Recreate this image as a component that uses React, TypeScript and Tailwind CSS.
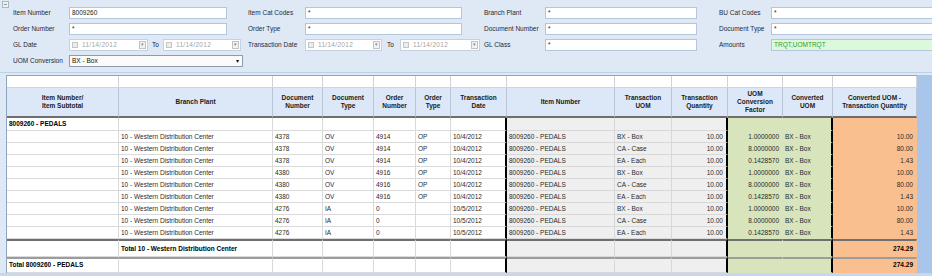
import React from "react";

const widths = [
  "w-[112px]",
  "w-[154px]",
  "w-[50px]",
  "w-[51px]",
  "w-[42px]",
  "w-[35px]",
  "w-[56px]",
  "w-[108px]",
  "w-[57px]",
  "w-[56px]",
  "w-[55px]",
  "w-[50px]",
  "w-[84px]",
];

const bodyCls = [
  "bg-white border-[#dadada]",
  "bg-white border-[#dadada]",
  "bg-white border-[#dadada]",
  "bg-white border-[#dadada]",
  "bg-white border-[#dadada]",
  "bg-white border-[#dadada]",
  "bg-white border-[#dadada] border-r-2 border-r-black",
  "bg-[#efefef] border-[#d8d8d8]",
  "bg-[#efefef] border-[#d8d8d8]",
  "bg-[#efefef] border-[#d8d8d8] border-r-2 border-r-black",
  "bg-[#d8e4bc] border-[#d8e4bc]",
  "bg-[#d8e4bc] border-[#d8e4bc] border-r-2 border-r-black",
  "bg-[#fabf8f] border-[#fabf8f]",
];

const rightAligned = [9, 10, 12];

const headers = [
  ["Item Number/", "Item Subtotal"],
  ["Branch Plant"],
  ["Document", "Number"],
  ["Document", "Type"],
  ["Order", "Number"],
  ["Order", "Type"],
  ["Transaction", "Date"],
  ["Item Number"],
  ["Transaction", "UOM"],
  ["Transaction", "Quantity"],
  ["UOM", "Conversion", "Factor"],
  ["Converted", "UOM"],
  ["Converted UOM -", "Transaction Quantity"],
];

const data = [
  ["4378", "OV", "4914", "OP", "10/4/2012", "BX - Box", "1.0000000", "10.00"],
  ["4378", "OV", "4914", "OP", "10/4/2012", "CA - Case", "8.0000000", "80.00"],
  ["4378", "OV", "4914", "OP", "10/4/2012", "EA - Each", "0.1428570", "1.43"],
  ["4380", "OV", "4916", "OP", "10/4/2012", "BX - Box", "1.0000000", "10.00"],
  ["4380", "OV", "4916", "OP", "10/4/2012", "CA - Case", "8.0000000", "80.00"],
  ["4380", "OV", "4916", "OP", "10/4/2012", "EA - Each", "0.1428570", "1.43"],
  ["4276", "IA", "0", "", "10/5/2012", "BX - Box", "1.0000000", "10.00"],
  ["4276", "IA", "0", "", "10/5/2012", "CA - Case", "8.0000000", "80.00"],
  ["4276", "IA", "0", "", "10/5/2012", "EA - Each", "0.1428570", "1.43"],
];

function Input({ w, value, green }: { w: string; value?: string; green?: boolean }) {
  return (
    <div
      className={`${w} shrink-0 h-[12px] flex items-center pl-[2px] border ${
        green ? "bg-[#dcf9d9] border-[#b4c6dd] text-[#2f9e2f]" : "bg-white border-[#b4c6dd]"
      }`}
    >
      {value}
    </div>
  );
}

function DateBox({ w }: { w: string }) {
  return (
    <div className={`${w} shrink-0 h-[12px] flex items-center border border-[#c4d1e1] bg-white`}>
      <span className="ml-[2px] w-[6px] h-[6px] border border-[#c6c6c6] bg-[#ececec]" />
      <span className="ml-[4px] text-[#a3a3a3] tracking-[0.3px]">11/14/2012</span>
      <span className="ml-auto mr-[1px] w-[7px] h-[8px] border border-[#c2c2c2] bg-[#f3f3f3] flex items-center justify-center text-[5px] text-[#888]">
        ▾
      </span>
    </div>
  );
}

function Label({ w, text }: { w: string; text: string }) {
  return <div className={`${w} shrink-0 whitespace-nowrap text-[#1e2a38]`}>{text}</div>;
}

function Gap({ w }: { w: string }) {
  return <div className={`${w} shrink-0`} />;
}

function FilterPanel() {
  return (
    <div className="relative h-[73px] border-b border-[#bdd0e9] pt-[5px] overflow-hidden">
      <svg className="absolute left-[2px] top-[1px]" width="7" height="7" viewBox="0 0 7 7">
        <rect x="0.5" y="0.5" width="6" height="6" fill="#eef2f7" stroke="#aab6c4" />
        <line x1="2" y1="3.5" x2="5" y2="3.5" stroke="#8794a3" />
      </svg>

      <div className="flex items-center h-[16px] pl-[13px]">
        <Label w="w-[56px]" text="Item Number" />
        <Input w="w-[158px]" value="8009260" />
        <Gap w="w-[21px]" />
        <Label w="w-[57px]" text="Item Cat Codes" />
        <Input w="w-[157px]" value="*" />
        <Gap w="w-[22px]" />
        <Label w="w-[61px]" text="Branch Plant" />
        <Input w="w-[152px]" value="*" />
        <Gap w="w-[22px]" />
        <Label w="w-[52px]" text="BU Cat Codes" />
        <Input w="w-[170px]" value="*" />
      </div>

      <div className="flex items-center h-[16px] pl-[13px]">
        <Label w="w-[56px]" text="Order Number" />
        <Input w="w-[158px]" value="*" />
        <Gap w="w-[21px]" />
        <Label w="w-[57px]" text="Order Type" />
        <Input w="w-[157px]" value="*" />
        <Gap w="w-[22px]" />
        <Label w="w-[61px]" text="Document Number" />
        <Input w="w-[152px]" value="*" />
        <Gap w="w-[22px]" />
        <Label w="w-[52px]" text="Document Type" />
        <Input w="w-[170px]" value="*" />
      </div>

      <div className="flex items-center h-[16px] pl-[13px]">
        <Label w="w-[56px]" text="GL Date" />
        <DateBox w="w-[79px]" />
        <div className="w-[15px] shrink-0 pl-[4px]">To</div>
        <DateBox w="w-[78px]" />
        <Gap w="w-[7px]" />
        <Label w="w-[57px]" text="Transaction Date" />
        <DateBox w="w-[77px]" />
        <div className="w-[18px] shrink-0 pl-[5px]">To</div>
        <DateBox w="w-[80px]" />
        <Gap w="w-[4px]" />
        <Label w="w-[61px]" text="GL Class" />
        <Input w="w-[152px]" value="*" />
        <Gap w="w-[22px]" />
        <Label w="w-[52px]" text="Amounts" />
        <Input w="w-[170px]" value="TRQT,UOMTRQT" green />
      </div>

      <div className="flex items-center h-[16px] pl-[13px]">
        <Label w="w-[56px]" text="UOM Conversion" />
        <div className="w-[174px] shrink-0 h-[12px] flex items-center pl-[2px] border border-[#8f9cae] bg-[#fbfbfb] text-[#111]">
          BX - Box
          <span className="ml-auto mr-[3px] text-[6px]">▾</span>
        </div>
      </div>
    </div>
  );
}

function BodyRow({
  cells,
  h,
  extra = "",
  bold = false,
  top = false,
}: {
  cells: string[];
  h: string;
  extra?: string;
  bold?: boolean;
  top?: boolean;
}) {
  return (
    <div className="flex">
      {cells.map((c, i) => (
        <div
          key={i}
          className={`${widths[i]} ${h} shrink-0 ${bodyCls[i]} border-r border-b ${extra} flex ${
            top ? "items-start pt-[1px]" : "items-center"
          } px-[2px] whitespace-nowrap ${rightAligned.includes(i) ? "justify-end pr-[3px]" : ""} ${
            bold ? "font-bold text-black" : "text-[#2a2a2a]"
          }`}
        >
          {c}
        </div>
      ))}
    </div>
  );
}

function Grid() {
  const empty = Array(13).fill("");
  return (
    <div className="shrink-0 border-l border-t border-[#8fa5c2] flex flex-col">
      <div className="flex">
        {widths.map((w, i) => (
          <div key={i} className={`${w} shrink-0 h-[12px] bg-white border-r border-b border-[#d3d3d3]`} />
        ))}
      </div>
      <div className="flex">
        {headers.map((h, i) => (
          <div
            key={i}
            className={`${widths[i]} shrink-0 h-[30px] bg-[#dce8f7] border-r border-[#b8c6d8] border-b-2 border-b-[#6e6e6e] flex flex-col items-center justify-center font-bold text-[#1a1a1a] leading-[8px] text-center whitespace-nowrap`}
          >
            {h.map((l, j) => (
              <span key={j}>{l}</span>
            ))}
          </div>
        ))}
      </div>
      <BodyRow cells={["8009260 - PEDALS", ...empty.slice(1)]} h="h-[13px]" bold />
      {data.map((r, k) => (
        <BodyRow
          key={k}
          h="h-[12px]"
          cells={[
            "",
            "10 - Western Distribution Center",
            r[0],
            r[1],
            r[2],
            r[3],
            r[4],
            "8009260 - PEDALS",
            r[5],
            "10.00",
            r[6],
            "BX - Box",
            r[7],
          ]}
        />
      ))}
      <BodyRow
        cells={["", "Total 10 - Western Distribution Center", ...empty.slice(2, 12), "274.29"]}
        h="h-[18px]"
        extra="border-t-2 border-t-[#6f6f6f]"
        bold
      />
      <BodyRow
        cells={["Total 8009260 - PEDALS", ...empty.slice(1, 12), "274.29"]}
        h="h-[16px]"
        extra="border-t-2 border-t-[#9c9c9c]"
        bold
        top
      />
    </div>
  );
}

export default function App() {
  return (
    <div className="w-[932px] h-[276px] overflow-hidden bg-[#dfe8f5] font-['Liberation_Sans',Arial,sans-serif] text-[6.5px] text-[#222]">
      <FilterPanel />
      <div className="mt-[2px] flex pl-[6px] h-[198px] overflow-hidden">
        <Grid />
        <div className="flex-1 bg-[#a9c5ea]" />
      </div>
      <div className="h-[3px] bg-[#c6d7ee]" />
    </div>
  );
}
